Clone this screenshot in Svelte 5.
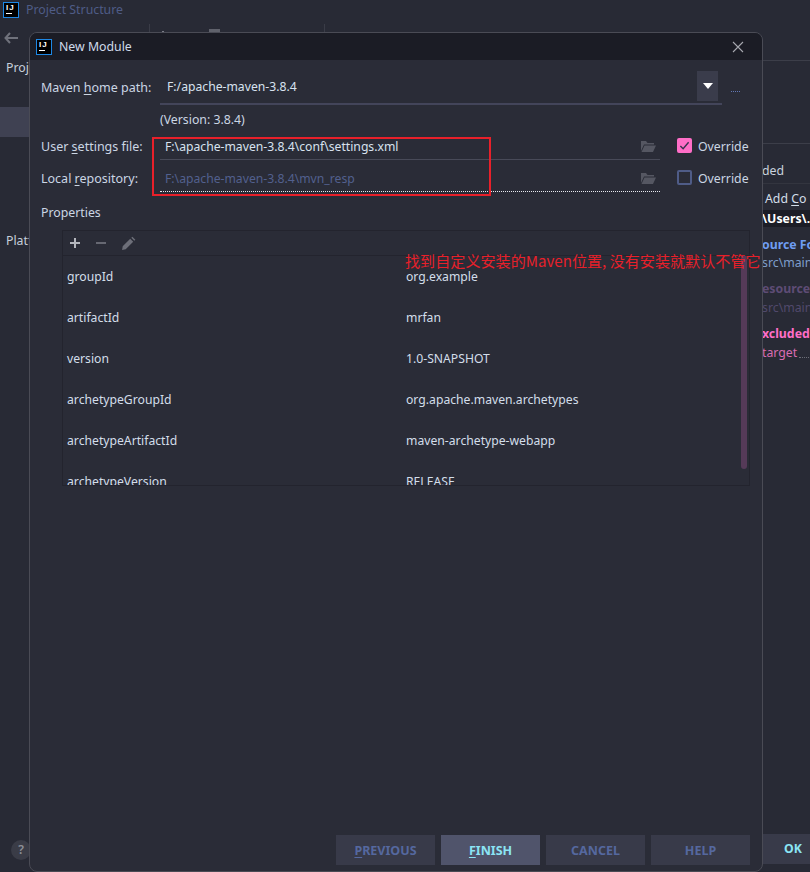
<script>
  const rows = [
    ['groupId', 'org.example'],
    ['artifactId', 'mrfan'],
    ['version', '1.0-SNAPSHOT'],
    ['archetypeGroupId', 'org.apache.maven.archetypes'],
    ['archetypeArtifactId', 'maven-archetype-webapp'],
    ['archetypeVersion', 'RELEASE']
  ];
</script>

{#snippet ijLogo()}
  <span class="logo"><span class="logo-t">IJ</span><span class="logo-bar"></span></span>
{/snippet}

{#snippet folder()}
  <svg class="folder" width="16" height="13" viewBox="0 0 16 13">
    <path d="M1 1h5l1.5 2H14v1.5H4L1 11z" fill="#555762"/>
    <path d="M4.5 5.5H16L13 12H1.5z" fill="#555762"/>
  </svg>
{/snippet}

<div class="screen">
  <header class="ide-title">
    {@render ijLogo()}
    <span class="ide-name">Project Structure</span>
  </header>

  <div class="ide-main">
    <aside class="side">
      <svg class="back" width="14" height="12" viewBox="0 0 14 12"><path d="M6 1 1.5 6 6 11M2 6h12" fill="none" stroke="#6f717b" stroke-width="2"/></svg>
      <i class="tick t1"></i>
      <i class="tick t2"></i>
      <i class="peek p1"></i>
      <i class="peek p2"></i>
      <div class="side-item proj">Project Settings</div>
      <div class="side-sel"></div>
      <div class="side-item plat">Platform Settings</div>
      <div class="help">?</div>
    </aside>
    <div class="right">
      <div class="r-sep first"></div>
      <div class="r-sep second"></div>
      <div class="r-row dim">ded</div>
      <div class="r-rule"></div>
      <div class="r-row add">Add <u>C</u>o</div>
      <div class="r-path">\Users\.</div>
      <div class="r-head blue">ource Fo</div>
      <div class="r-sub bluish">src\main\</div>
      <div class="r-head purple">esource</div>
      <div class="r-sub purplish">src\main\</div>
      <div class="r-head pink">xcluded</div>
      <div class="r-sub pinkish"><span>target</span><i></i></div>
      <div class="ok">OK</div>
    </div>
  </div>

  <section class="dialog">
    <div class="d-title">
      {@render ijLogo()}
      <span class="d-name">New Module</span>
      <svg class="close" width="12" height="12" viewBox="0 0 12 12"><path d="M1 1l10 10M11 1 1 11" stroke="#a5a7ae" stroke-width="1.1"/></svg>
    </div>

    <div class="d-body">
      <div class="f home">
        <label class="lab" for="h">Maven <u>h</u>ome path:</label>
        <div class="combo">
          <span id="h" class="val">F:/apache-maven-3.8.4</span>
          <span class="drop"><svg width="10" height="6" viewBox="0 0 10 6"><path d="M0 0h10L5 6z" fill="#fff"/></svg></span>
        </div>
        <span class="dots"></span>
      </div>
      <div class="ver">(Version: 3.8.4)</div>
      <div class="f st">
        <label class="lab" for="u">User <u>s</u>ettings file:</label>
        <div class="inp solid"><span id="u" class="val">F:\apache-maven-3.8.4\conf\settings.xml</span>{@render folder()}</div>
        <span class="chk on"><svg width="12" height="10" viewBox="0 0 12 10"><path d="M1.5 5l3 3 6-7" fill="none" stroke="#3a3350" stroke-width="1.6"/></svg></span>
        <span class="ov">Override</span>
      </div>
      <div class="f lr">
        <label class="lab" for="l">Local <u>r</u>epository:</label>
        <div class="inp dashed"><span id="l" class="val muted">F:\apache-maven-3.8.4\mvn_resp</span>{@render folder()}</div>
        <span class="chk"></span>
        <span class="ov">Override</span>
      </div>
      <div class="props">Properties</div>

      <div class="table">
        <div class="tools">
          <svg width="12" height="12" viewBox="0 0 12 12"><path d="M6 1v10M1 6h10" stroke="#b4b6bd" stroke-width="2"/></svg>
          <svg width="12" height="12" viewBox="0 0 12 12"><path d="M1 6h10" stroke="#666872" stroke-width="2"/></svg>
          <svg width="15" height="15" viewBox="0 0 14 14"><path d="M1 13l.6-3.4 7-7 2.8 2.8-7 7zM9.6 1.6l1-1 2.8 2.8-1 1z" fill="#6d6f79"/></svg>
        </div>
        <div class="list">
          {#each rows as [k, v]}
            <div class="row"><span class="k">{k}</span><span class="v">{v}</span></div>
          {/each}
          <div class="scroll"></div>
        </div>
      </div>

      <div class="btns">
        <button><u>P</u>REVIOUS</button>
        <button class="primary"><u>F</u>INISH</button>
        <button>CANCEL</button>
        <button>HELP</button>
      </div>
    </div>
  </section>

  <div class="mark"></div>
  <div class="note">找到自定义安装的Maven位置, 没有安装就默认不管它</div>
</div>

<style>
  :global(body) { margin: 0; background: #282a35; }
  .screen {
    position: relative; width: 810px; height: 872px; overflow: hidden;
    background: #282a35; color: #d3deea;
    font: 12.3px/18px "Noto Sans", "Noto Sans CJK SC", sans-serif;
  }
  u { text-underline-offset: 2px; text-decoration-thickness: 1px; }

  .logo {
    display: inline-flex; flex-direction: column; box-sizing: border-box;
    width: 16px; height: 16px; background: #000; border: 1px solid #1e88e5;
    flex: none; padding: 0 0 0 2px; color: #fff;
  }
  .logo-t { font: 700 8px/9px "Liberation Sans", sans-serif; letter-spacing: 1px; }
  .logo-bar { width: 6px; height: 1px; background: #fff; margin-top: 1px; }

  .ide-title { display: flex; align-items: center; gap: 7px; height: 20px; padding-left: 3px; }
  .ide-name { color: #4f5c87; }

  .ide-main { display: flex; height: 852px; }
  .side { width: 762px; position: relative; }
  .back { position: absolute; left: 4px; top: 12px; }
  .tick { position: absolute; top: 4px; width: 1px; height: 9px; background: #3a3c47; }
  .t1 { left: 149px; }
  .t2 { left: 324px; }
  .peek { position: absolute; background: #7b7d87; }
  .p1 { left: 162px; top: 11px; width: 2px; height: 2px; }
  .p2 { left: 209px; top: 9px; width: 11px; height: 4px; background: #60626c; }
  .side-item { position: absolute; left: 6px; white-space: nowrap; width: 23px; overflow: hidden; color: #c6cfdb; }
  .proj { top: 39px; }
  .plat { top: 212px; }
  .side-sel { position: absolute; left: 0; top: 87px; width: 29px; height: 30px; background: #3f4152; }
  .help {
    position: absolute; left: 11px; top: 820px; width: 20px; height: 20px; border-radius: 50%;
    background: #3a3c47; color: #8d8f98; text-align: center; line-height: 20px; font-weight: 600;
  }

  .right { flex: 1; position: relative; white-space: nowrap; overflow: hidden; }
  .r-sep { position: absolute; left: 0; right: 0; height: 1px; background: #3c3e49; }
  .first { top: 40px; }
  .second { top: 123px; }
  .r-row { position: absolute; left: 0; }
  .dim { top: 142px; color: #c9d2de; }
  .r-rule { position: absolute; left: 0; right: 0; top: 163px; height: 1px; background: #33353f; }
  .add { top: 170px; left: 3px; color: #d3deea; }
  .r-path { position: absolute; left: 0; right: 0; top: 190px; height: 17px; line-height: 17px; background: #1c1d26; color: #fff; font-weight: 700; }
  .r-head, .r-sub { position: absolute; left: 0; }
  .r-head { font-weight: 700; }
  .blue { top: 216px; color: #6f9df2; }
  .bluish { top: 234px; color: #7f9ecb; }
  .purple { top: 260px; color: #5e4c75; }
  .purplish { top: 279px; color: #51496c; }
  .pink { top: 305px; color: #ff6ec7; }
  .pinkish { top: 324px; color: #d96cb3; display: flex; align-items: flex-end; }
  .pinkish i { width: 20px; border-bottom: 1px dotted #6c6e78; margin: 0 0 4px 2px; }
  .ok {
    position: absolute; left: 1px; width: 60px; top: 814px; height: 30px; line-height: 30px;
    background: #383a49; color: #8be4f4; font-weight: 700; text-align: center;
  }

  .dialog {
    position: absolute; left: 29px; top: 32px; width: 734px; height: 840px; box-sizing: border-box;
    border: 1px solid #4a4b55; border-radius: 8px; background: #2a2c37; overflow: hidden;
  }
  .d-title {
    display: flex; align-items: center; gap: 7px; height: 27px; padding: 0 18px 0 6px; background: #1b1c25;
  }
  .d-name { color: #cfdaea; }
  .close { margin-left: auto; }

  .d-body { padding: 0 11px; position: relative; height: 811px; }
  .f { display: flex; align-items: center; }
  .lab { width: 119px; flex: none; font-size: 12.5px; margin-top: 1px; }
  .lab, .ov, .ver, .props { color: #cbd6e4; }
  .ov { margin-top: 1px; }
  .val { white-space: nowrap; color: #d8e2ef; font-size: 12.2px; }
  .inp .val { margin-top: 1px; }
  .muted { color: #52608e; }

  .home { height: 45px; align-items: flex-start; }
  .home .lab { margin-top: 19px; }
  .combo {
    width: 562px; height: 34px; margin-top: 11px; flex: none; box-sizing: border-box;
    border-bottom: 2px solid #43455a; display: flex; justify-content: space-between; padding-left: 7px;
  }
  .combo .val { margin-top: 7px; }
  .drop {
    width: 21px; height: 30px; background: #3a3c4b; margin-right: 4px;
    display: flex; align-items: center; justify-content: center;
  }
  .dots {
    width: 9px; height: 0; margin: 31px 0 0 9px;
    border-top: 1px dotted #6277b4;
  }

  .ver { margin-left: 119px; height: 18px; margin-top: 6px; }

  .st { margin-top: 8px; height: 32px; align-items: flex-start; }
  .lr { height: 32px; align-items: flex-start; }
  .inp {
    width: 500px; height: 23px; flex: none; box-sizing: border-box; display: flex;
    justify-content: space-between; padding: 0 4px 0 5px;
  }
  .solid { border-bottom: 1px solid #484a58; }
  .dashed { border-bottom: 1px dotted #e8eaf0; }
  .folder { margin-top: 3px; }
  .chk {
    width: 15px; height: 15px; box-sizing: border-box; border: 2px solid #4f5c87; border-radius: 2px;
    margin: 1px 6px 0 17px; flex: none; display: flex; align-items: center; justify-content: center;
  }
  .chk.on { background: #ff6ec7; border-color: #ff6ec7; }
  .props { margin-top: 3px; height: 18px; }

  .table {
    box-sizing: border-box; width: 688px; height: 256px; margin: 8px 0 0 21px;
    border: 1px solid #23242e; overflow: hidden;
  }
  .tools { height: 24px; display: flex; align-items: center; gap: 14px; padding-left: 6px; border-bottom: 1px solid #23242e; }
  .list { position: relative; height: 231px; }
  .row { height: 41px; display: flex; align-items: center; font-size: 12.2px; }
  .k { width: 343px; padding-left: 4px; flex: none; box-sizing: border-box; }
  .v { color: #d3deea; }
  .scroll {
    position: absolute; left: 678px; top: 0; width: 6px; height: 213px; background: #553a58;
    border-radius: 0 0 3px 3px;
  }

  .btns { position: absolute; right: 12px; top: 775px; display: flex; gap: 6px; }
  button {
    width: 99px; height: 30px; border: 0; padding: 0; background: #383a49; color: #55689f;
    font: 700 12.5px "Noto Sans", sans-serif;
  }
  .primary { background: #50546b; color: #8be4f4; }

  .mark { position: absolute; left: 152px; top: 137px; width: 339px; height: 59px; box-sizing: border-box; border: 2px solid #e8202a; }
  .note {
    position: absolute; left: 405px; top: 250px; width: 358px; height: 20px; overflow: hidden; white-space: nowrap;
    color: #e8202a; font: 15.1px/20px "Noto Sans CJK SC", sans-serif;
  }
</style>
